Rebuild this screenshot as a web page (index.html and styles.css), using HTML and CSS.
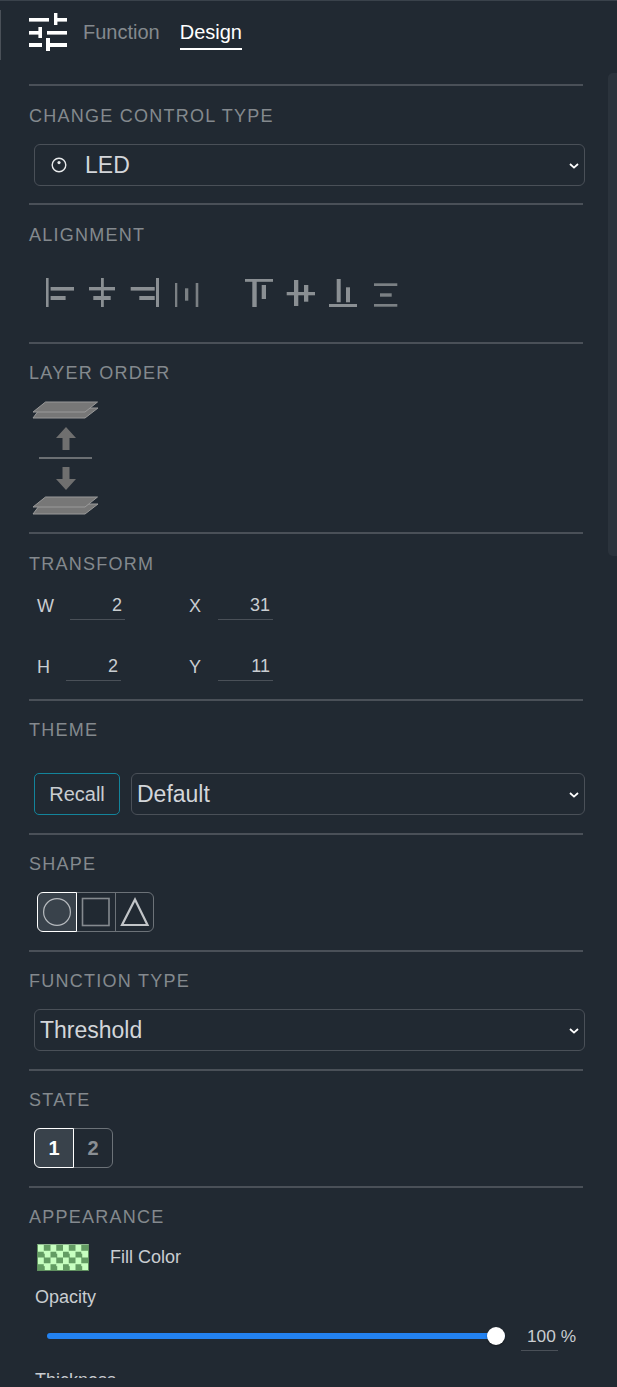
FILE: index.html
```html
<!DOCTYPE html>
<html lang="en">
<head>
<meta charset="utf-8">
<title>Design panel</title>
<link rel="stylesheet" href="styles.css">
</head>
<body>
<div class="page">
  <span class="stub"></span>
  <span class="scrollbar"></span>
  <header class="head">
    <svg class="head-icon" width="38" height="38" viewBox="0 0 38 38" fill="#fff">
      <rect x="0" y="5" width="20" height="3.6"/><rect x="25" y="0" width="3.4" height="12"/><rect x="25" y="5" width="13" height="3.6"/>
      <rect x="0" y="18" width="13" height="3.6"/><rect x="9.4" y="14" width="3.6" height="11"/><rect x="18" y="18" width="20" height="3.6"/>
      <rect x="0" y="30" width="13" height="4"/><rect x="17" y="25" width="4" height="13"/><rect x="17" y="30" width="21" height="4"/>
    </svg>
    <span class="tab">Function</span>
    <span class="tab tab-on">Design</span>
  </header>

  <section class="sec">
    <h2 class="title">CHANGE CONTROL TYPE</h2>
    <div class="pick">
      <svg class="led" width="16" height="16" viewBox="0 0 16 16" fill="none"><circle cx="8" cy="8" r="6.8" stroke="#e8eaec" stroke-width="1.4"/><circle cx="8" cy="5.6" r="1.6" fill="#e8eaec"/></svg>
      <select class="sel sel-led"><option>LED</option></select>
      <svg class="chev" width="10" height="6" viewBox="0 0 10 6"><path d="M1 1l4 3.6L9 1" fill="none" stroke="#fff" stroke-width="1.8"/></svg>
    </div>
  </section>

  <section class="sec">
    <h2 class="title">ALIGNMENT</h2>
    <div class="aligns">
      <svg class="ai" viewBox="0 0 30 30"><rect x="1" y="0" width="2.6" height="29"/><rect x="5.6" y="9" width="23.4" height="3.6"/><rect x="5.6" y="18" width="15" height="4"/></svg>
      <svg class="ai" viewBox="0 0 30 30"><rect x="14" y="0" width="2.8" height="29"/><rect x="2" y="9" width="26" height="3.4"/><rect x="6.3" y="18" width="17.4" height="4"/></svg>
      <svg class="ai" viewBox="0 0 30 30"><rect x="27" y="0" width="3" height="29"/><rect x="1.7" y="9" width="24" height="3.6"/><rect x="10.3" y="18" width="15.4" height="4"/></svg>
      <svg class="ai ai-dim" viewBox="0 0 30 30"><rect x="4" y="5" width="2.3" height="24"/><rect x="14" y="10.3" width="3.3" height="12.4"/><rect x="24.7" y="5" width="2.6" height="24"/></svg>
      <svg class="ai ai-gap" viewBox="0 0 30 30"><rect x="2" y="1" width="28" height="2.8"/><rect x="9.3" y="1" width="4.4" height="28"/><rect x="18.7" y="7" width="4.3" height="14"/></svg>
      <svg class="ai" viewBox="0 0 30 30"><rect x="1.7" y="14" width="28.3" height="3.3"/><rect x="9" y="2" width="4.3" height="26"/><rect x="19" y="7" width="4.3" height="16.7"/></svg>
      <svg class="ai" viewBox="0 0 30 30"><rect x="2" y="26" width="28" height="3"/><rect x="9.7" y="1" width="4" height="23.3"/><rect x="19" y="9.3" width="4" height="15"/></svg>
      <svg class="ai ai-dim" viewBox="0 0 30 30"><rect x="5" y="5.3" width="23.3" height="2.7"/><rect x="11" y="15.3" width="11.7" height="3.4"/><rect x="5" y="26" width="23.3" height="2.7"/></svg>
    </div>
  </section>

  <section class="sec sec-layer">
    <h2 class="title">LAYER ORDER</h2>
    <div class="layers">
      <svg class="layer" width="66" height="50" viewBox="0 0 66 50">
        <polygon class="plate" points="8.5,7 66,7 53,17 1,17"/>
        <polygon class="plate" points="13.5,1 65.5,1 53,11 1,11"/>
        <polygon class="arrow" points="34,26 44,37 37.5,37 37.5,49 30.5,49 30.5,37 24,37"/>
      </svg>
      <span class="layer-line"></span>
      <svg class="layer" width="66" height="50" viewBox="0 0 66 50">
        <polygon class="arrow" points="30.5,0 37.5,0 37.5,12 44,12 34,23 24,12 30.5,12"/>
        <polygon class="plate" points="8.5,37 66,37 53,47 1,47"/>
        <polygon class="plate" points="13.5,30 65.5,30 53,40 1,40"/>
      </svg>
    </div>
  </section>

  <section class="sec sec-trans">
    <h2 class="title">TRANSFORM</h2>
    <div class="trow">
      <label class="f f-w"><span class="f-l">W</span><input class="num" value="2"></label>
      <label class="f"><span class="f-l">X</span><input class="num num-x" value="31"></label>
    </div>
    <div class="trow trow-last">
      <label class="f f-h"><span class="f-l">H</span><input class="num" value="2"></label>
      <label class="f"><span class="f-l">Y</span><input class="num num-x" value="11"></label>
    </div>
  </section>

  <section class="sec sec-theme">
    <h2 class="title">THEME</h2>
    <div class="theme">
      <button class="recall">Recall</button>
      <div class="pick pick-theme">
        <select class="sel sel-plain"><option>Default</option></select>
        <svg class="chev" width="10" height="6" viewBox="0 0 10 6"><path d="M1 1l4 3.6L9 1" fill="none" stroke="#fff" stroke-width="1.8"/></svg>
      </div>
    </div>
  </section>

  <section class="sec tight sec-shape">
    <h2 class="title">SHAPE</h2>
    <div class="seg seg-shape">
      <button class="seg-b seg-on"><svg width="30" height="30" viewBox="0 0 30 30"><circle cx="15" cy="15" r="13.4" class="sh"/></svg></button>
      <button class="seg-b"><svg width="30" height="30" viewBox="0 0 30 30"><rect x="1.5" y="1.5" width="26.5" height="27" class="sh sh-sq"/></svg></button>
      <button class="seg-b seg-end"><svg width="30" height="30" viewBox="0 0 30 30"><polygon points="15,2.5 27.5,28 2,28" class="sh sh-tri"/></svg></button>
    </div>
  </section>

  <section class="sec tight sec-shape">
    <h2 class="title">FUNCTION TYPE</h2>
    <div class="pick">
      <select class="sel sel-plain"><option>Threshold</option></select>
      <svg class="chev" width="10" height="6" viewBox="0 0 10 6"><path d="M1 1l4 3.6L9 1" fill="none" stroke="#fff" stroke-width="1.8"/></svg>
    </div>
  </section>

  <section class="sec tight sec-shape">
    <h2 class="title">STATE</h2>
    <div class="seg seg-state">
      <button class="seg-b seg-on num-b">1</button>
      <button class="seg-b num-b num-off">2</button>
    </div>
  </section>

  <section class="sec sec-app">
    <h2 class="title">APPEARANCE</h2>
    <div class="fill"><span class="swatch"></span><span class="txt">Fill Color</span></div>
    <div class="txt op">Opacity</div>
    <div class="slide">
      <input class="range" type="range" min="0" max="100" value="100">
      <span class="pct">100 %</span>
    </div>
    <div class="txt thick">Thickness</div>
  </section>
</div>
</body>
</html>
```
FILE: styles.css
```css
* { box-sizing: border-box; }
html, body { margin: 0; padding: 0; background: #212932; }
body { font-family: "Liberation Sans", Arial, sans-serif; color: #c9cdd1; }
.page { position: relative; width: 617px; height: 1378px; overflow: hidden; border-top: 1px solid #3a424b; }
.stub { position: absolute; left: 0; top: 9px; width: 1px; height: 50px; background: #4a5058; }
.scrollbar { position: absolute; right: 0; top: 72px; width: 9px; height: 483px; background: #2b333c; border-radius: 5px 0 0 5px; }

.head { height: 83px; padding: 12px 0 0 29px; display: flex; align-items: flex-start; }
.head-icon { display: block; flex: none; }
.tab { font-size: 20px; line-height: 23px; color: #84898e; margin: 8px 0 0 16px; padding-bottom: 4px; border-bottom: 2px solid transparent; }
.tab-on { color: #fff; border-bottom-color: #fff; margin-left: 20px; }

.sec { margin: 0 34px 0 29px; border-top: 2px solid #4a5058; padding: 20px 0 17px; }
.title { margin: 0 0 18px; font-size: 18px; line-height: 20px; font-weight: 400; letter-spacing: 1.25px; color: #84898e; }
.tight { padding-bottom: 18px; }
.tight .title { margin-bottom: 17px; }
.sec-shape { padding-top: 19px; }
.tight.sec-shape .title { margin-bottom: 18px; }

.pick { position: relative; margin: 0 -2px 0 5px; }
.pick-theme { flex: 1; margin: 0; }
.led { position: absolute; left: 17px; top: 13px; }
.chev { position: absolute; right: 6px; top: 19px; display: block; pointer-events: none; }
.sel { display: block; width: 100%; height: 42px; appearance: none; -webkit-appearance: none; background: #212932; color: #d3d6da; border: 1px solid #4a5058; border-radius: 6px; font-family: "Liberation Sans", Arial, sans-serif; font-size: 23px; outline: none; }
.sel-led { padding-left: 50px; }
.sel-plain { padding-left: 5px; }

.aligns { display: flex; gap: 12px; padding: 15px 0 17px 16px; }
.ai { width: 30px; height: 30px; flex: none; fill: #8a8f93; display: block; }
.ai-dim { fill: #7b8084; }
.ai-gap { margin-left: 30px; }

.sec-layer { padding: 19px 0 15px; }
.sec-layer .title { margin-bottom: 19px; }
.layers { display: flex; flex-direction: column; align-items: flex-start; margin-left: 3px; margin-top: -1px; }
.layer { display: block; }
.plate { fill: #777; stroke: #9a9a9a; stroke-width: 1; }
.arrow { fill: #6f6f6f; }
.layer-line { display: block; width: 53px; height: 2px; background: #6b6f73; margin: 6px 0 8px 7px; }

.sec-trans { padding-bottom: 0; }
.sec-trans .title { margin-bottom: -1px; }
.trow { display: flex; align-items: flex-start; height: 61px; padding-top: 15px; }
.trow-last { height: 65px; }
.f { display: flex; align-items: flex-start; font-size: 18px; }
.f-l { color: #c9cdd1; line-height: 32px; padding: 2px 0 0 8px; }
.f-w, .f-h { width: 152px; }
.f-w .num { margin-left: 16px; }
.f-h .num { margin-left: 16px; }
.num-x { margin-left: 17px; }
.num { width: 55px; height: 32px; padding: 3px 3px 0 0; background: transparent; border: 0; border-bottom: 1px solid #4a5058; color: #c9cdd1; text-align: right; font-family: "Liberation Sans", Arial, sans-serif; font-size: 18px; outline: none; }

.sec-theme { padding: 19px 0 18px; }
.sec-theme .title { margin-bottom: 33px; }
.theme { display: flex; gap: 11px; padding-left: 5px; margin-right: -2px; }
.recall { flex: none; width: 86px; height: 42px; padding: 0; background: transparent; border: 1px solid #13849b; border-radius: 5px; color: #c9cdd1; font-family: "Liberation Sans", Arial, sans-serif; font-size: 20px; }

.seg { display: flex; margin-left: 5px; width: max-content; }
.seg-shape { margin-left: 8px; }
.seg-b { display: flex; align-items: center; justify-content: center; height: 40px; padding: 0; background: transparent; border: 1px solid #6c7278; margin-left: -1px; font-family: "Liberation Sans", Arial, sans-serif; }
.seg-b:first-child { margin-left: 0; border-radius: 6px 0 0 6px; }
.seg-b:last-child { border-radius: 0 6px 6px 0; }
.seg-shape .seg-b { width: 40px; }
.seg-shape .seg-end { width: 39px; }
.seg-on { position: relative; z-index: 1; background: #39424b; border-color: #fff; }
.sh { fill: none; stroke: #b6babe; stroke-width: 1.2; }
.sh-sq { stroke: #858a8f; stroke-width: 1.6; }
.sh-tri { stroke: #c2c5c8; stroke-width: 2.2; }
.seg-state .seg-b { width: 40px; }
.num-b { font-size: 20px; font-weight: 700; color: #fff; }
.num-off { color: #8a8f94; }

.sec-app { padding: 19px 0 0; }
.sec-app .title { margin-bottom: 17px; }
.fill { display: flex; align-items: center; padding-left: 8px; height: 27px; }
.swatch { width: 52px; height: 27px; border: 1px solid #5f8f5f; border-top-color: #8fb88f; background-color: #c7ffc0; background-image: conic-gradient(#639c63 25%, transparent 0 50%, #639c63 0 75%, transparent 0); background-size: 12.5px 12.5px; }
.txt { font-size: 18px; line-height: 22px; color: #c9cdd1; }
.fill .txt { margin-left: 21px; padding-bottom: 2px; }
.op { margin: 15px 0 0 6px; }
.slide { display: flex; align-items: flex-start; margin-top: 19px; padding-left: 18px; height: 32px; }
.range { appearance: none; -webkit-appearance: none; width: 458px; height: 18px; margin: 0; background: transparent; }
.range::-webkit-slider-runnable-track { height: 6px; background: #2382f0; border-radius: 3px; }
.range::-webkit-slider-thumb { -webkit-appearance: none; width: 18px; height: 18px; margin-top: -6px; border-radius: 50%; background: #fff; box-shadow: 0 1px 2px rgba(0,0,0,.4); }
.pct { display: block; width: 37px; margin-left: 16px; height: 24px; padding: 0 0 0 6px; border-bottom: 1px solid #4a5058; font-size: 17.3px; line-height: 18px; white-space: nowrap; color: #c9cdd1; }
.thick { margin: 10px 0 0 6px; }
```
